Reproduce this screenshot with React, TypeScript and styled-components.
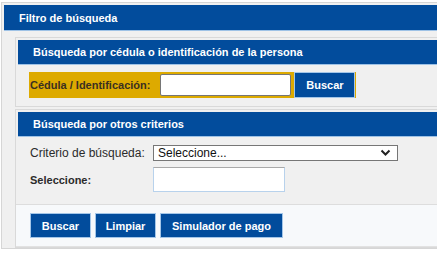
import React from "react";
import styled, { createGlobalStyle } from "styled-components";

const GlobalStyle = createGlobalStyle`
  html, body {
    margin: 0;
    padding: 0;
    background: #ffffff;
    overflow: hidden;
  }
  body {
    font-family: "Liberation Sans", Arial, sans-serif;
    font-size: 12px;
    color: #333333;
  }
`;

const Page = styled.div`
  padding: 2px 0 0 1px;
`;

const Outer = styled.div`
  width: 640px;
  border: 1px solid #d6d6d6;
  background: #f0f0f0;
  padding: 2px 0 0 2px;
`;

const Header = styled.div<{ $h: number; $pad: number }>`
  height: ${(p) => p.$h}px;
  box-sizing: border-box;
  background: #024c9c;
  border-bottom: 1px solid #9ec2e6;
  color: #ffffff;
  font-weight: bold;
  font-size: 11px;
  display: flex;
  align-items: center;
  padding-left: ${(p) => p.$pad}px;
`;

const OuterBody = styled.div`
  padding: 6px 0 0 11px;
  display: flex;
  flex-direction: column;
  gap: 2px;
`;

const Panel = styled.div`
  border: 1px solid #d9d9d9;
  padding: 2px 0 0 2px;
  background: #f0f0f0;
`;

const PanelBody = styled.div`
  padding: 7px 0 8px 11px;
`;

const YellowRow = styled.div`
  display: inline-flex;
  align-items: stretch;
  height: 26px;
  background: #ddaa00;
  padding-right: 1px;
`;

const YellowLabel = styled.label`
  display: flex;
  align-items: center;
  padding: 0 7px 0 1px;
  font-weight: bold;
  font-size: 11px;
  color: #3a3020;
`;

const InputCell = styled.div`
  display: flex;
  align-items: center;
  padding: 0 3px 0 3px;
`;

const TextInput = styled.input<{ $w: number; $h: number; $soft?: boolean }>`
  width: ${(p) => p.$w}px;
  height: ${(p) => p.$h}px;
  box-sizing: border-box;
  margin: 0;
  background: #ffffff;
  border: 1px solid ${(p) => (p.$soft ? "#b8d2ec" : "#767676")};
  border-top-color: ${(p) => (p.$soft ? "#a9a9a9" : "#767676")};
  border-radius: ${(p) => (p.$soft ? 0 : 2)}px;
  outline: none;
  font-family: inherit;
  font-size: 12px;
`;

const Button = styled.button<{ $w: number }>`
  width: ${(p) => p.$w}px;
  height: 100%;
  min-height: 25px;
  box-sizing: border-box;
  margin: 0;
  background: #024c9c;
  border: 1px solid #a4c6e8;
  color: #ffffff;
  font-family: "Liberation Sans", Arial, sans-serif;
  font-weight: bold;
  font-size: 11px;
  padding: 0;
  cursor: pointer;
`;

const Fields = styled.div`
  display: grid;
  grid-template-columns: 123px auto;
  row-gap: 6px;
  align-items: center;
  padding: 8px 0 12px 12px;
`;

const FieldLabel = styled.span<{ $bold?: boolean }>`
  font-weight: ${(p) => (p.$bold ? "bold" : "normal")};
  font-size: ${(p) => (p.$bold ? 11 : 12)}px;
  color: #2b2b2b;
`;

const SelectBox = styled.div`
  width: 245px;
  height: 16px;
  box-sizing: border-box;
  background: #ffffff;
  border: 1px solid #767676;
  display: flex;
  align-items: center;
  justify-content: space-between;
  padding: 0 6px 0 4px;
  font-size: 12px;
  color: #111111;
`;

const Footer = styled.div`
  margin: 0 0 0 -2px;
  border-top: 1px solid #dddddd;
  border-bottom: 1px solid #e2e2e2;
  background: #f7f9fb;
  display: flex;
  gap: 4px;
  padding: 8px 0 8px 14px;
`;

const Chevron = () => (
  <svg width="11" height="8" viewBox="0 0 11 8">
    <path d="M1.5 1.5 L5.5 5.5 L9.5 1.5" fill="none" stroke="#222" strokeWidth="2" />
  </svg>
);

export default function App() {
  return (
    <Page>
      <GlobalStyle />
      <Outer>
        <Header $h={26} $pad={15}>Filtro de búsqueda</Header>
        <OuterBody>
          <Panel>
            <Header $h={25} $pad={15}>
              Búsqueda por cédula o identificación de la persona
            </Header>
            <PanelBody>
              <YellowRow>
                <YellowLabel>Cédula / Identificación:</YellowLabel>
                <InputCell>
                  <TextInput $w={131} $h={22} />
                </InputCell>
                <Button $w={61}>Buscar</Button>
              </YellowRow>
            </PanelBody>
          </Panel>
          <Panel>
            <Header $h={25} $pad={15}>Búsqueda por otros criterios</Header>
            <Fields>
              <FieldLabel>Criterio de búsqueda:</FieldLabel>
              <SelectBox>
                <span>Seleccione...</span>
                <Chevron />
              </SelectBox>
              <FieldLabel $bold>Seleccione:</FieldLabel>
              <TextInput $w={132} $h={25} $soft />
            </Fields>
            <Footer>
              <Button $w={61}>Buscar</Button>
              <Button $w={61}>Limpiar</Button>
              <Button $w={123}>Simulador de pago</Button>
            </Footer>
          </Panel>
        </OuterBody>
      </Outer>
    </Page>
  );
}
